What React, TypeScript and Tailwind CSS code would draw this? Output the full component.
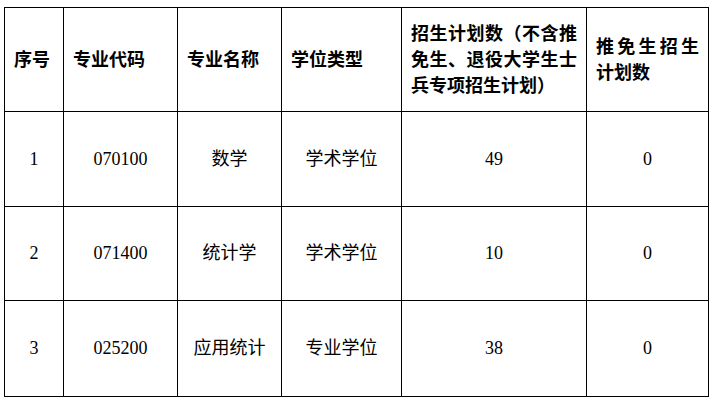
const headers = [
  "序号",
  "专业代码",
  "专业名称",
  "学位类型",
  "招生计划数（不含推免生、退役大学生士兵专项招生计划）",
  "推免生招生计划数",
];

const rows = [
  { no: "1", code: "070100", name: "数学", type: "学术学位", plan: "49", exempt: "0", h: "h-[95px]" },
  { no: "2", code: "071400", name: "统计学", type: "学术学位", plan: "10", exempt: "0", h: "h-[94px]" },
  { no: "3", code: "025200", name: "应用统计", type: "专业学位", plan: "38", exempt: "0", h: "h-[96px]" },
];

export default function App() {
  return (
    <div lang="zh-CN" className="w-[716px] h-[401px] bg-white pt-[7px] pl-[4px] text-black font-['Liberation_Serif','Noto_Sans_CJK_SC',serif]">
      <table className="table-fixed border-collapse w-[704px] text-[18px]">
        <colgroup>
          <col className="w-[59px]" />
          <col className="w-[114px]" />
          <col className="w-[104px]" />
          <col className="w-[120px]" />
          <col className="w-[185px]" />
          <col className="w-[122px]" />
        </colgroup>
        <thead>
          <tr className="h-[104px]">
            {headers.map((h) => (
              <th
                key={h}
                className="border border-black px-[9px] text-justify align-middle font-bold leading-[26px]"
              >
                {h}
              </th>
            ))}
          </tr>
        </thead>
        <tbody>
          {rows.map((r) => (
            <tr key={r.no} className={r.h}>
              <td className="border border-black text-center align-middle">{r.no}</td>
              <td className="border border-black text-center align-middle">{r.code}</td>
              <td className="border border-black text-center align-middle">{r.name}</td>
              <td className="border border-black text-center align-middle">{r.type}</td>
              <td className="border border-black text-center align-middle">{r.plan}</td>
              <td className="border border-black text-center align-middle">{r.exempt}</td>
            </tr>
          ))}
        </tbody>
      </table>
    </div>
  );
}
